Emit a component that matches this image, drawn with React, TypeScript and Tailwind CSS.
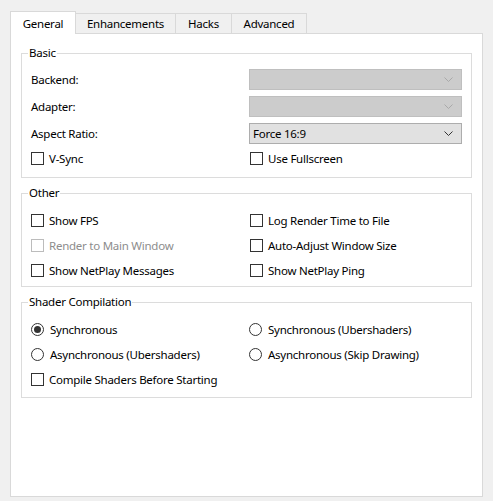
const font = { fontFamily: '"Noto Sans", "Open Sans", sans-serif' };

function Chevron({ disabled }: { disabled?: boolean }) {
  return (
    <svg width="9" height="6" viewBox="0 0 9 6" className="shrink-0">
      <path d="M0.5 0.5 L4.5 4.5 L8.5 0.5" fill="none" stroke={disabled ? '#a9a9a9' : '#333333'} strokeWidth="1" />
    </svg>
  );
}

function Combo({ value, disabled }: { value?: string; disabled?: boolean }) {
  return (
    <div
      className={
        disabled
          ? 'flex h-[21px] items-center justify-between border border-[#bfbfbf] bg-[#cccccc] pl-[3px] pr-[8px]'
          : 'flex h-[21px] items-center justify-between border border-[#adadad] bg-[#e1e1e1] pl-[3px] pr-[8px]'
      }
    >
      <span className="text-black">{value}</span>
      <Chevron disabled={disabled} />
    </div>
  );
}

function Check({ label, disabled, className }: { label: string; disabled?: boolean; className?: string }) {
  return (
    <div className={'flex h-[17px] items-center gap-[5px] ' + (className ?? '')}>
      <span
        className={
          disabled
            ? 'h-[13px] w-[13px] shrink-0 border border-[#bcbcbc] bg-white'
            : 'h-[13px] w-[13px] shrink-0 border border-[#333333] bg-white'
        }
      />
      <span className={disabled ? 'text-[#8d8d8d]' : 'text-black'}>{label}</span>
    </div>
  );
}

function Radio({ label, checked, className }: { label: string; checked?: boolean; className?: string }) {
  return (
    <div className={'flex h-[17px] items-center gap-[6px] ' + (className ?? '')}>
      <span className="flex h-[13px] w-[13px] shrink-0 items-center justify-center rounded-full border border-[#333333] bg-white">
        {checked && <span className="h-[7px] w-[7px] rounded-full bg-[#333333]" />}
      </span>
      <span className="text-black">{label}</span>
    </div>
  );
}

function Group({ title, className, children }: { title: string; className?: string; children: React.ReactNode }) {
  return (
    <fieldset className={'border border-[#dcdcdc] px-[9px] ' + (className ?? '')}>
      <legend className="ml-[-3px] px-[1px] leading-[16px] text-black">{title}</legend>
      {children}
    </fieldset>
  );
}

const tabs = [
  { name: 'General', w: 'w-[66px]' },
  { name: 'Enhancements', w: 'w-[101px]' },
  { name: 'Hacks', w: 'w-[57px]' },
  { name: 'Advanced', w: 'w-[76px]' },
];

export default function App() {
  return (
    <div
      className="flex h-screen w-full flex-col bg-[#f0f0f0] px-[10px] pb-[4px] pt-[11px] text-[11.5px] tracking-[-0.25px]"
      style={font}
    >
      <div className="flex h-[22px] items-end">
        {tabs.map((t, i) =>
          i === 0 ? (
            <div
              key={t.name}
              className={'relative z-10 mb-[-1px] flex h-[23px] items-center justify-center border border-b-0 border-[#d9d9d9] bg-white pt-[1px] ' + t.w}
            >
              {t.name}
            </div>
          ) : (
            <div
              key={t.name}
              className={'ml-[-1px] flex h-[20px] items-center justify-center border border-b-0 border-[#d9d9d9] bg-[#f0f0f0] ' + t.w}
            >
              {t.name}
            </div>
          )
        )}
      </div>
      <div className="flex-1 border border-[#d9d9d9] bg-white px-[10px] pt-[11px]">
        <Group title="Basic" className="pb-[10px] pt-[8px]">
          <div className="flex flex-col gap-[6px]">
            <div className="grid grid-cols-[218px_1fr] items-center">
              <span>Backend:</span>
              <Combo disabled />
            </div>
            <div className="grid grid-cols-[218px_1fr] items-center">
              <span>Adapter:</span>
              <Combo disabled />
            </div>
            <div className="grid grid-cols-[218px_1fr] items-center">
              <span>Aspect Ratio:</span>
              <Combo value="Force 16:9" />
            </div>
            <div className="grid grid-cols-[218px_1fr] items-center">
              <Check label="V-Sync" />
              <Check label="Use Fullscreen" className="ml-[1px]" />
            </div>
          </div>
        </Group>

        <Group title="Other" className="mt-[7px] pb-[7px] pt-[11px]">
          <div className="grid grid-cols-[218px_1fr] gap-y-[8px]">
            <Check label="Show FPS" />
            <Check label="Log Render Time to File" className="ml-[1px]" />
            <Check label="Render to Main Window" disabled />
            <Check label="Auto-Adjust Window Size" className="ml-[1px]" />
            <Check label="Show NetPlay Messages" />
            <Check label="Show NetPlay Ping" className="ml-[1px]" />
          </div>
        </Group>

        <Group title="Shader Compilation" className="mt-[7px] pb-[9px] pt-[11px]">
          <div className="grid grid-cols-[218px_1fr] gap-y-[8px]">
            <Radio label="Synchronous" checked />
            <Radio label="Synchronous (Ubershaders)" />
            <Radio label="Asynchronous (Ubershaders)" />
            <Radio label="Asynchronous (Skip Drawing)" />
            <Check label="Compile Shaders Before Starting" />
          </div>
        </Group>
      </div>
    </div>
  );
}
